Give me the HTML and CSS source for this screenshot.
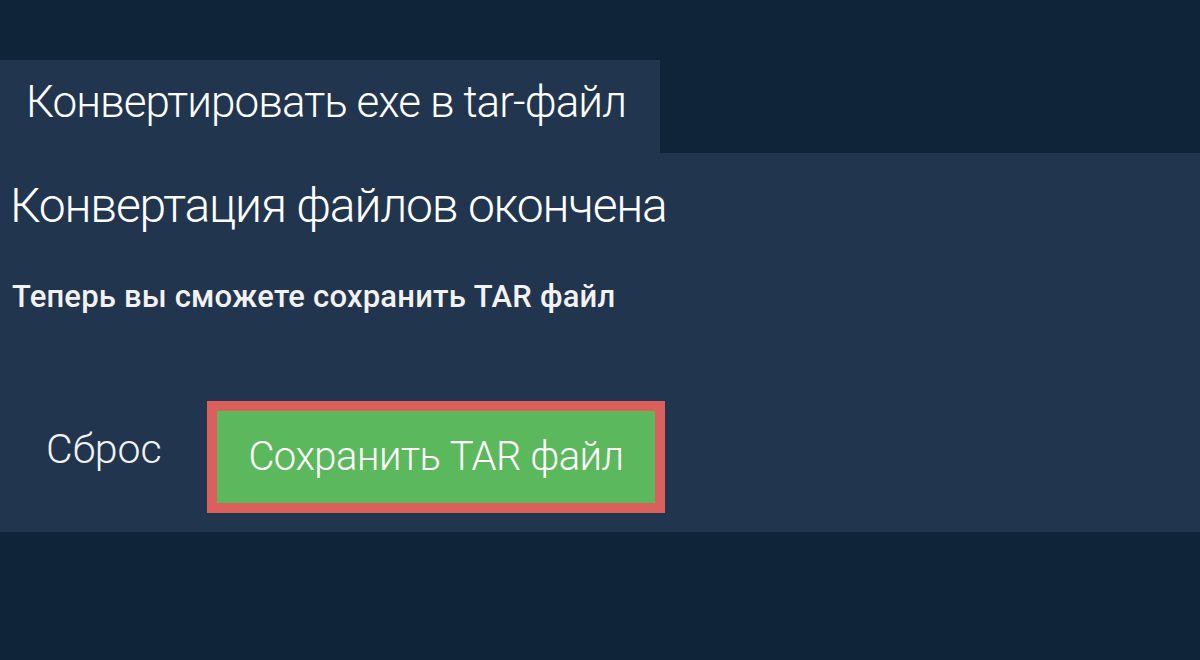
FILE: index.html
```html
<!DOCTYPE html>
<html lang="ru">
<head>
<meta charset="utf-8">
<title>Конвертировать exe в tar-файл</title>
<link rel="stylesheet" href="styles.css">
</head>
<body>
<div class="page">
  <div class="tab">Конвертировать exe в tar-файл</div>
  <section class="panel">
    <h2 class="status">Конвертация файлов окончена</h2>
    <p class="note">Теперь вы сможете сохранить TAR файл</p>
    <div class="actions">
      <button class="reset" type="button">Сброс</button>
      <button class="save" type="button">Сохранить TAR файл</button>
    </div>
  </section>
</div>
</body>
</html>
```

FILE: styles.css
```css
html, body {
  margin: 0;
  padding: 0;
  background: #0f2339;
}
body {
  font-family: Roboto, "Noto Sans", "Liberation Sans", sans-serif;
  color: #ffffff;
}
.page {
  padding-top: 60px;
}
.tab {
  display: flex;
  align-items: center;
  box-sizing: border-box;
  width: 660px;
  height: 93px;
  padding: 0 0 10px 26px;
  background: #21364e;
  font-size: 44px;
  font-weight: 300;
  line-height: 52px;
  letter-spacing: -0.95px;
}
.panel {
  box-sizing: border-box;
  height: 379px;
  padding: 25px 12px 0 10px;
  background: #21364e;
}
.status {
  margin: 0;
  font-size: 48px;
  font-weight: 300;
  line-height: 56px;
  letter-spacing: -1.2px;
}
.note {
  margin: 45px 0 0 2px;
  font-size: 31px;
  font-weight: 500;
  line-height: 36px;
  letter-spacing: 0.2px;
  color: #f2f2f2;
}
.actions {
  display: grid;
  grid-template-columns: 197px 458px;
  align-items: center;
  margin-top: 86px;
}
.reset {
  justify-self: start;
  margin: 0 0 16px 36px;
  padding: 0;
  border: 0;
  background: transparent;
  color: #f2f2f2;
  font-family: inherit;
  font-size: 41px;
  font-weight: 300;
  line-height: 46px;
}
.save {
  box-sizing: border-box;
  width: 458px;
  height: 112px;
  padding: 0;
  border: 10px solid #db5f5b;
  background: #5cb85c;
  color: #ffffff;
  font-family: inherit;
  font-size: 40px;
  font-weight: 300;
  line-height: 46px;
  letter-spacing: -0.5px;
}
```
